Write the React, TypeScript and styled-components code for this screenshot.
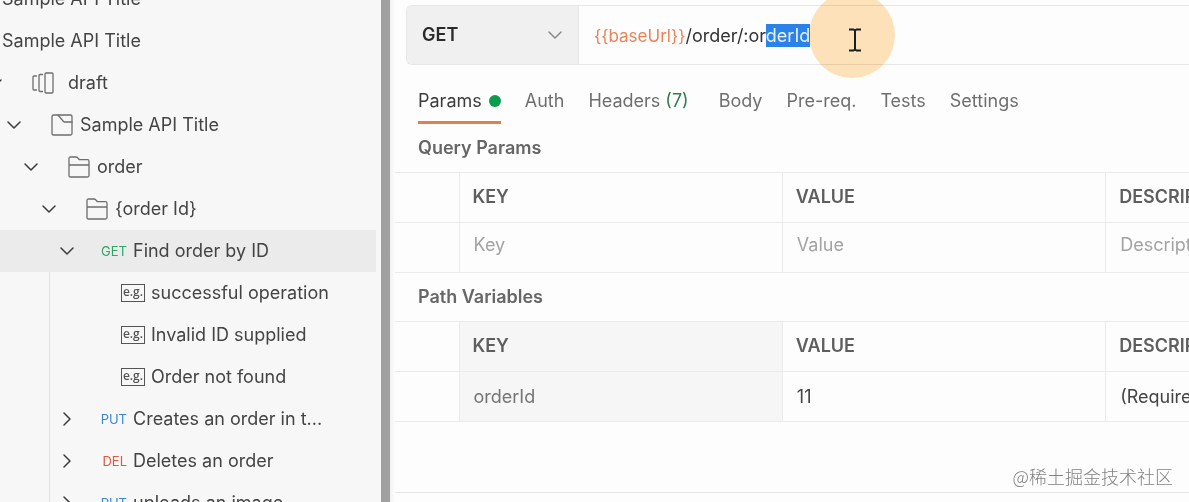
import React from "react";
import styled, { createGlobalStyle } from "styled-components";

const GlobalStyle = createGlobalStyle`
  * { box-sizing: border-box; }
  body {
    margin: 0;
    background: #fdfdfd;
    color: #444;
    font: 400 18px/24px Inter, "Liberation Sans", sans-serif;
    overflow: hidden;
  }
  button, input, select { font: inherit; color: inherit; }
`;

const Page = styled.div`
  display: flex;
  height: 100vh;
  overflow: hidden;
  position: relative;
`;

/* ---------- sidebar ---------- */

const Sidebar = styled.nav`
  flex: 0 0 381px;
  padding-right: 5px;
  background: #f7f7f7;
  overflow: hidden;
`;

const Divider = styled.div`
  flex: 0 0 9px;
  background: #a0a0a0;
`;

const Gutter = styled.div`
  flex: 0 0 5px;
  background: linear-gradient(to right, #f1f1f1, #fdfdfd);
`;

const Tree = styled.ul`
  list-style: none;
  margin: -22px 0 0;
  padding: 0;
`;

const Branch = styled.ul`
  list-style: none;
  margin: 0 0 0 49px;
  padding: 0;
  border-left: 1px solid #e4e4e4;
`;

const Row = styled.button<{ $indent: number; $selected?: boolean }>`
  display: flex;
  align-items: center;
  width: 100%;
  height: 42px;
  padding: 0 0 0 ${(p) => p.$indent}px;
  border: 0;
  background: ${(p) => (p.$selected ? "#ebebeb" : "transparent")};
  text-align: left;
  white-space: nowrap;
`;

const Caret = styled.span<{ $offscreen?: boolean }>`
  flex: none;
  display: flex;
  justify-content: center;
  width: 14px;
  margin-left: ${(p) => (p.$offscreen ? -12 : 0)}px;
  color: #3c3c3c;
`;

const Glyph = styled.span<{ $wide?: boolean }>`
  flex: none;
  display: flex;
  width: ${(p) => (p.$wide ? 36 : 29)}px;
  margin-left: 30px;
  color: #6e6e6e;
`;

const Verb = styled.span<{ $color: string }>`
  flex: none;
  width: 40px;
  margin: 0 6px 0 13px;
  color: ${(p) => p.$color};
  font-size: 13px;
  text-align: right;
`;

const ExampleTag = styled.span`
  flex: none;
  width: 24px;
  height: 18px;
  margin-right: 6px;
  border: 1px solid #555;
  color: #555;
  font: 600 12px/14px "Open Sans", sans-serif;
  text-align: center;
`;

/* ---------- request panel ---------- */

const Main = styled.main`
  flex: 1;
  min-width: 0;
  display: flex;
  flex-direction: column;
  overflow: hidden;
`;

const RequestBar = styled.div`
  display: flex;
  height: 60px;
  margin: 5px 0 0 11px;
  border: 1px solid #e6e6e6;
  border-right: 0;
  border-radius: 6px 0 0 6px;
`;

const MethodBox = styled.label`
  flex: 0 0 172px;
  display: flex;
  align-items: center;
  padding-right: 16px;
  border-right: 1px solid #e6e6e6;
  border-radius: 5px 0 0 5px;
  background: #f0f0f0;
  color: #8a8a8a;
`;

const MethodSelect = styled.select`
  flex: 1;
  min-width: 0;
  height: 100%;
  padding: 0 0 0 15px;
  border: 0;
  appearance: none;
  background: transparent;
  color: #2a2a2a;
  font-weight: 600;
`;

const UrlField = styled.div`
  flex: 1;
  position: relative;
  padding: 18px 15px;
  color: #333;
  white-space: nowrap;
`;

const UrlText = styled.div`
  outline: 0;
`;

const Variable = styled.span`
  color: #ec8257;
  font-size: 17px;
`;

const Selection = styled.mark`
  padding: 1px 0;
  background: #2b83ea;
  color: #e6f1ff;
`;

const Halo = styled.div`
  position: absolute;
  top: -14px;
  left: 230px;
  width: 86px;
  height: 86px;
  border-radius: 50%;
  background: #ffe3ba;
  mix-blend-mode: multiply;
`;

const Pointer = styled.svg`
  position: absolute;
  top: 22px;
  left: 269px;
`;

const Tabs = styled.div`
  display: flex;
  gap: 24px;
  padding: 23px 0 0 23px;
`;

const Tab = styled.button<{ $active?: boolean }>`
  display: flex;
  align-items: center;
  gap: 7px;
  height: 36px;
  padding: 0 0 8px;
  border: 0;
  border-bottom: 3px solid ${(p) => (p.$active ? "#e2804d" : "transparent")};
  background: transparent;
  color: ${(p) => (p.$active ? "#3c3c3c" : "#6f6f6f")};
  white-space: nowrap;
`;

const Dot = styled.i`
  width: 12px;
  height: 12px;
  border-radius: 50%;
  background: #0a9d4c;
`;

const Count = styled.span`
  margin: 0 6px 0 -2px;
  color: #2f7d51;
`;

const SectionTitle = styled.h2`
  margin: 0;
  padding: 12px 0 12px 23px;
  color: #666;
  font-size: 18px;
  line-height: 24px;
  font-weight: 600;
`;

const Grid = styled.table`
  width: calc(100% + 240px);
  table-layout: fixed;
  border-collapse: collapse;
  border-top: 1px solid #ebebeb;

  th, td {
    height: 50px;
    padding: 0 0 0 13px;
    border-bottom: 1px solid #ebebeb;
    border-left: 1px solid #ebebeb;
    text-align: left;
  }
  th { padding-bottom: 2px; color: #5e5e5e; font-weight: 600; }
  tr > :first-child { width: 64px; border-left: 0; }
`;

const Cell = styled.td<{ $shaded?: boolean }>`
  background: ${(p) => (p.$shaded ? "#f6f6f6" : "transparent")};
`;

const CellInput = styled.input`
  display: block;
  width: 100%;
  height: 24px;
  padding: 0 0 0 1px;
  border: 0;
  outline: 0;
  background: transparent;
  &::placeholder { color: #a3a3a3; opacity: 1; }
  &:placeholder-shown { margin-bottom: 6px; }
  &[readonly] { color: #757575; }
`;

const Footer = styled.footer`
  height: 10px;
  margin-top: auto;
  border-top: 1px solid #e6e6e6;
`;

const Watermark = styled.div`
  position: absolute;
  right: 16px;
  bottom: 14px;
  color: #808080;
  font: 300 18px/24px "Noto Sans CJK SC", sans-serif;
`;

/* ---------- icons ---------- */

const stroke = { fill: "none", stroke: "currentColor", strokeLinecap: "round", strokeLinejoin: "round" } as const;

const Down = () => (
  <svg width="14" height="8" viewBox="0 0 14 8" {...stroke} strokeWidth="1.5"><path d="M1 1l6 6 6-6" /></svg>
);
const Right = () => (
  <svg width="8" height="14" viewBox="0 0 8 14" {...stroke} strokeWidth="1.5"><path d="M1 1l6 6-6 6" /></svg>
);
const Folder = () => (
  <svg width="22" height="22" viewBox="0 0 22 22" {...stroke} strokeWidth="1.3">
    <path d="M1 19V2.5Q1 1 2.500 1H8q1 0 1.700.8l1 1.200q.6.700 1.600.7H19.500Q21 3.700 21 5.200V19.500Q21 21 19.500 21H2.500Q1 21 1 19.500V9H21" />
  </svg>
);
const Collection = () => (
  <svg width="22" height="22" viewBox="0 0 22 22" {...stroke} strokeWidth="1.3">
    <rect x="1" y="1" width="20" height="20" rx="1.500" />
    <path d="M7 1l5.500 6.500q.4.500 1 .5H21" />
  </svg>
);
const Version = () => (
  <svg width="22" height="22" viewBox="0 0 22 22" {...stroke} strokeWidth="1.3">
    <rect x="13" y="1" width="8" height="20" rx="1" />
    <path d="M10.500 2.500H8q-1 0-1 1v15q0 1 1 1h2.500M4.500 4H2q-1 0-1 1v12q0 1 1 1h2.500" />
  </svg>
);

/* ---------- data ---------- */

const folders = [
  { indent: 7, icon: <Collection />, name: "Sample API Title" },
  { indent: 24, icon: <Folder />, name: "order" },
  { indent: 42, icon: <Folder />, name: "{order Id}" },
];
const examples = ["successful operation", "Invalid ID supplied", "Order not found"];
const requests = [
  { verb: "PUT", color: "#3a87d6", name: "Creates an order in t..." },
  { verb: "DEL", color: "#e0563a", name: "Deletes an order" },
  { verb: "PUT", color: "#3a87d6", name: "uploads an image" },
];

const Head = ({ shaded }: { shaded?: boolean }) => (
  <thead>
    <tr>
      <td />
      <Cell as="th" scope="col" $shaded={shaded}>KEY</Cell>
      <th scope="col">VALUE</th>
      <th scope="col">DESCRIPTION</th>
    </tr>
  </thead>
);

export default function App() {
  return (
    <>
      <GlobalStyle />
      <Page>
        <Sidebar aria-label="Collections">
          <Tree>
            <li><Row $indent={2}>Sample API Title</Row></li>
            <li><Row $indent={2}>Sample API Title</Row></li>
            <li>
              <Row $indent={0}>
                <Caret $offscreen><Down /></Caret>
                <Glyph $wide><Version /></Glyph>draft
              </Row>
            </li>
            {folders.map((f) => (
              <li key={f.name}>
                <Row $indent={f.indent}><Caret><Down /></Caret><Glyph>{f.icon}</Glyph>{f.name}</Row>
              </li>
            ))}
            <li>
              <Row $indent={60} $selected>
                <Caret><Down /></Caret><Verb $color="#2fa566">GET</Verb>Find order by ID
              </Row>
              <Branch>
                {examples.map((name) => (
                  <li key={name}><Row $indent={71}><ExampleTag>e.g.</ExampleTag>{name}</Row></li>
                ))}
                {requests.map((r) => (
                  <li key={r.name}>
                    <Row $indent={10}><Caret><Right /></Caret><Verb $color={r.color}>{r.verb}</Verb>{r.name}</Row>
                  </li>
                ))}
              </Branch>
            </li>
          </Tree>
        </Sidebar>
        <Divider />
        <Gutter />
        <Main>
          <RequestBar>
            <MethodBox>
              <MethodSelect aria-label="Method" defaultValue="GET">
                <option>GET</option>
              </MethodSelect>
              <Down />
            </MethodBox>
            <UrlField>
              <UrlText role="textbox" aria-label="Request URL" contentEditable suppressContentEditableWarning spellCheck={false}>
                <Variable>{"{{baseUrl}}"}</Variable>/order/:or<Selection>derId</Selection>
              </UrlText>
              <Halo />
              <Pointer width="14" height="24" viewBox="0 0 14 24" fill="none" stroke="#1c1c24" strokeWidth="2">
                <path d="M1 1.500H5.500L7 2.500 8.500 1.500H13M7 2V22M1 22.500H5.500L7 21.500 8.500 22.500H13" />
              </Pointer>
            </UrlField>
          </RequestBar>
          <Tabs role="tablist">
            <Tab role="tab" aria-selected $active>Params<Dot /></Tab>
            <Tab role="tab">Auth</Tab>
            <Tab role="tab">Headers<Count>(7)</Count></Tab>
            <Tab role="tab">Body</Tab>
            <Tab role="tab">Pre-req.</Tab>
            <Tab role="tab">Tests</Tab>
            <Tab role="tab">Settings</Tab>
          </Tabs>
          <SectionTitle>Query Params</SectionTitle>
          <Grid>
            <Head />
            <tbody>
              <tr>
                <td />
                <td><CellInput aria-label="Query key" placeholder="Key" /></td>
                <td><CellInput aria-label="Query value" placeholder="Value" /></td>
                <td><CellInput aria-label="Query description" placeholder="Description" /></td>
              </tr>
            </tbody>
          </Grid>
          <SectionTitle>Path Variables</SectionTitle>
          <Grid>
            <Head shaded />
            <tbody>
              <tr>
                <td />
                <Cell $shaded><CellInput aria-label="Path key" readOnly value="orderId" /></Cell>
                <td><CellInput aria-label="Path value" defaultValue="11" /></td>
                <td><CellInput aria-label="Path description" defaultValue="(Required)" /></td>
              </tr>
            </tbody>
          </Grid>
          <Footer />
        </Main>
        <Watermark>@稀土掘金技术社区</Watermark>
      </Page>
    </>
  );
}
